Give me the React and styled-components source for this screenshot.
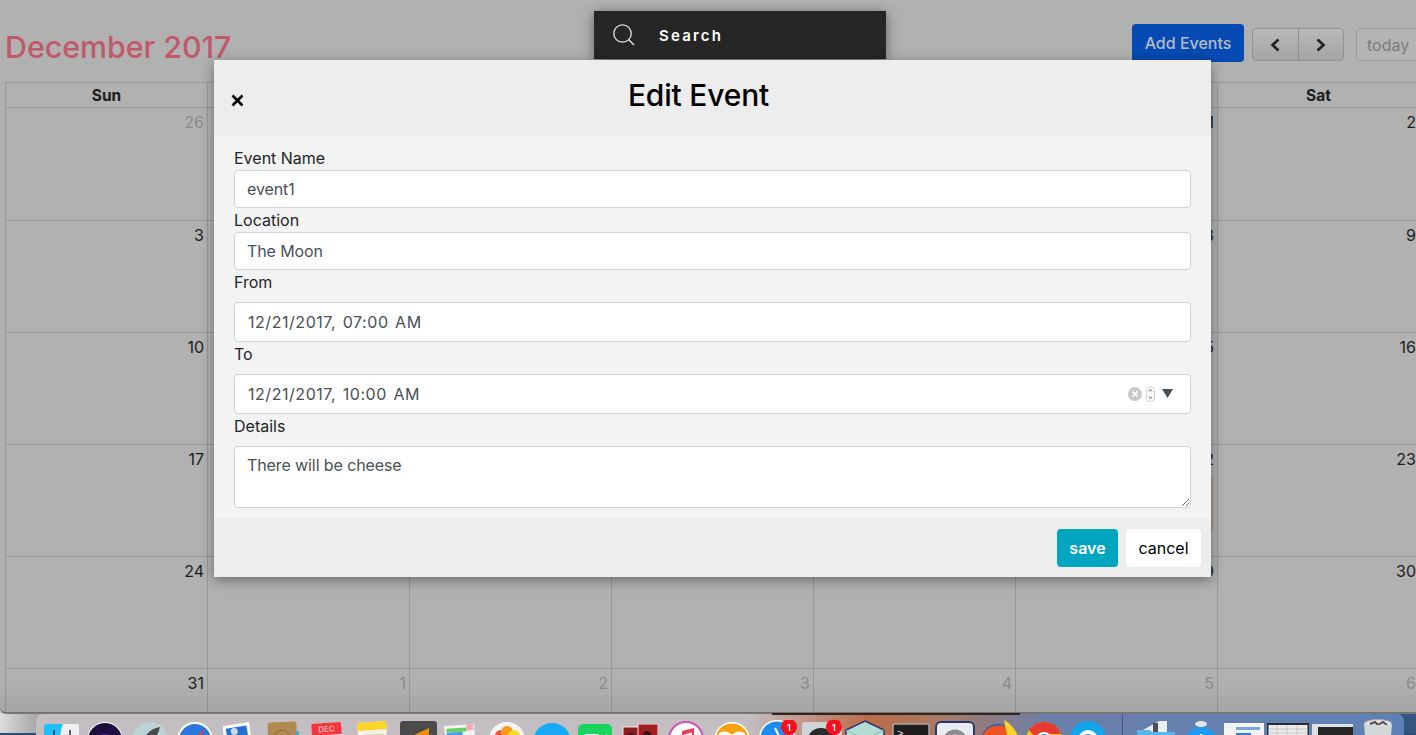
import React from "react";
import styled, { createGlobalStyle } from "styled-components";

const GlobalStyle = createGlobalStyle`
  html, body {
    margin: 0;
    padding: 0;
    overflow: hidden;
    font-family: Inter, "Liberation Sans", sans-serif;
  }
  * { box-sizing: border-box; }
`;

const Screen = styled.div`
  position: relative;
  width: 1416px;
  height: 735px;
  overflow: hidden;
  background:
    linear-gradient(0deg, #2c4b79 0, #2c4b79 2px, transparent 2px),
    linear-gradient(90deg, #dcdcdc 0, #a8a8a8 36px, #34557f 1100px, #34557f 100%);
  &::after {
    content: "";
    position: absolute;
    left: 772px;
    top: 713px;
    width: 248px;
    height: 2px;
    background: #33261f;
  }
`;

const Page = styled.div`
  width: 1430px;
  height: 714px;
  background: #b1b1b1;
  border-bottom: 2px solid #7a7a7a;
  border-bottom-left-radius: 6px;
  overflow: hidden;
  padding-left: 5px;
`;

const Header = styled.header`
  height: 82px;
  display: flex;
  align-items: flex-start;
  justify-content: space-between;
`;

const MonthTitle = styled.h1`
  margin: 29px 0 0;
  font-size: 30.4px;
  line-height: 36px;
  font-weight: 500;
  letter-spacing: -0.05px;
  color: #c05a69;
`;

const Controls = styled.div`
  display: flex;
  align-items: flex-start;
  padding-top: 24px;
  padding-right: 4px;
`;

const AddButton = styled.button`
  width: 112px;
  height: 38px;
  border: 0;
  border-radius: 4px;
  background: #054bb3;
  color: #b6bbc4;
  font: 500 16px Inter, sans-serif;
`;

const NavGroup = styled.div`
  display: flex;
  margin: 4px 12px 0 8px;
  width: 92px;
  height: 33px;
  border: 1px solid #939393;
  border-radius: 4px;
  background: linear-gradient(180deg, #b9b9b9, #a4a4a4);
`;

const NavButton = styled.button`
  flex: 1;
  display: flex;
  align-items: center;
  justify-content: center;
  padding: 0;
  border: 0;
  background: none;
  & + & { border-left: 1px solid #8f8f8f; }
`;

const TodayButton = styled.button`
  margin-top: 4px;
  width: 70px;
  height: 33px;
  border: 1px solid #9a9a9a;
  border-radius: 4px;
  background: #b4b4b4;
  color: #7b7b7b;
  font: 400 16px Inter, sans-serif;
  text-align: left;
  padding: 0 0 0 10px;
`;

const CalendarGrid = styled.div`
  display: grid;
  grid-template-columns: repeat(7, 202px);
  grid-template-rows: 25px 113px repeat(5, 112px);
  width: 1415px;
  border-top: 1px solid #989898;
  border-left: 1px solid #989898;
  color: #1d1d1d;
`;

const DayName = styled.div`
  border-right: 1px solid #989898;
  border-bottom: 1px solid #989898;
  font-size: 15.5px;
  line-height: 26px;
  font-weight: 700;
  text-align: center;
`;

const DayCell = styled.div`
  padding: 4px 3px 0 0;
  border-right: 1px solid #989898;
  border-bottom: 1px solid #989898;
  font-size: 16px;
  line-height: 20px;
  text-align: right;
  color: ${(p) => (p.$muted ? "#8b8b8b" : "#1d1d1d")};
`;

const EventChip = styled.div`
  height: 56px;
  margin: 7px 1px 0 2px;
  border-radius: 3px;
  background: #af9596;
`;

const Shade = styled.div`
  position: absolute;
  left: 0;
  top: 680px;
  width: 100%;
  height: 33px;
  background: linear-gradient(180deg, rgba(0, 0, 0, 0), rgba(0, 0, 0, 0.07));
  pointer-events: none;
`;

const SearchBar = styled.div`
  position: absolute;
  left: 594px;
  top: 11px;
  width: 292px;
  height: 48px;
  display: flex;
  align-items: center;
  gap: 24px;
  padding-left: 19px;
  background: #262626;
  box-shadow: 0 2px 12px rgba(0, 0, 0, 0.45);
`;

const SearchLabel = styled.span`
  color: #fff;
  font-size: 15px;
  font-weight: 600;
  letter-spacing: 2.2px;
`;

const Modal = styled.div`
  position: absolute;
  left: 214px;
  top: 60px;
  width: 997px;
  height: 517px;
  display: flex;
  flex-direction: column;
  background: #f3f3f3;
  box-shadow: 0 3px 12px rgba(0, 0, 0, 0.4);
`;

const ModalHead = styled.div`
  height: 76px;
  flex: none;
  display: grid;
  grid-template-columns: 1fr auto 1fr;
  background: #ededed;
  border-bottom: 1px solid #f1f1f1;
`;

const CloseButton = styled.button`
  justify-self: start;
  align-self: start;
  margin: 34px 0 0 17px;
  padding: 0;
  border: 0;
  background: none;
  display: flex;
`;

const ModalTitle = styled.h2`
  margin: 15px 28px 0 0;
  font-size: 30px;
  line-height: 40px;
  font-weight: 500;
  letter-spacing: -0.2px;
  color: #000;
`;

const ModalBody = styled.form`
  flex: 1;
  padding: 10px 20px 0;
`;

const FieldLabel = styled.label`
  display: block;
  height: 24px;
  font-size: 16px;
  line-height: 24px;
  color: #212529;
  margin-bottom: ${(p) => (p.$spaced ? "8px" : "0")};
`;

const TextInput = styled.input`
  display: block;
  width: 100%;
  height: 38px;
  padding: 0 12px;
  border: 1px solid #ced4da;
  border-radius: 4px;
  background: #fff;
  color: #495057;
  font: 400 16px Inter, sans-serif;
  letter-spacing: -0.1px;
`;

const DateField = styled.div`
  height: 40px;
  display: flex;
  align-items: center;
  justify-content: space-between;
  padding: 0 16px 0 13px;
  border: 1px solid #ced4da;
  border-radius: 4px;
  background: #fff;
  color: #495057;
  font-size: 16px;
  word-spacing: 1.5px;
  letter-spacing: 0.55px;
`;

const DateControls = styled.div`
  display: flex;
  align-items: center;
`;

const Notes = styled.textarea`
  display: block;
  width: 100%;
  height: 62px;
  padding: 8px 12px;
  border: 1px solid #ced4da;
  border-radius: 4px;
  background: #fff;
  color: #495057;
  font: 400 16px Inter, sans-serif;
  letter-spacing: -0.1px;
  resize: vertical;
  outline: none;
`;

const ModalFoot = styled.div`
  height: 59px;
  flex: none;
  display: flex;
  justify-content: flex-end;
  align-items: flex-start;
  gap: 8px;
  padding: 11px 10px 0;
  background: #ededed;
`;

const FootButton = styled.button`
  width: ${(p) => p.$w}px;
  height: 38px;
  border: 0;
  border-radius: 4px;
  background: ${(p) => (p.$primary ? "#00a5bf" : "#fff")};
  color: ${(p) => (p.$primary ? "#fff" : "#000")};
  font: ${(p) => (p.$primary ? 600 : 400)} 16px Inter, sans-serif;
`;

const Dock = styled.div`
  display: flex;
  width: 1368px;
  height: 22px;
  margin-left: 36px;
  overflow: hidden;
  border-radius: 7px 7px 0 0;
  background: linear-gradient(90deg, #c2bec1 0, #c2bec1 52%, #bb6b49 61%, #a87a64 66%, #6b7fa8 74%, #5e80b6 100%);
`;

const DockIcon = styled.svg`
  flex: none;
  width: ${(p) => p.$w}px;
  height: 40px;
  margin-left: ${(p) => p.$gap}px;
  margin-top: ${(p) => p.$top}px;
`;

const DockDivider = styled.div`
  flex: none;
  width: 1px;
  height: 22px;
  margin-left: 15px;
  background: #3e5780;
`;

const weekdays = ["Sun", "Mon", "Tue", "Wed", "Thu", "Fri", "Sat"];

const days = [];
for (let i = 0; i < 42; i++) {
  const n = i < 5 ? 26 + i : i < 36 ? i - 4 : i - 35;
  days.push({ n, muted: i < 5 || i >= 36 });
}

const Finder = () => (
  <>
    <rect width="35" height="36" rx="2" fill="#eef0f3" />
    <path d="M0 2a2 2 0 0 1 2-2h17c-3 8-4 16-4 36H2a2 2 0 0 1-2-2z" fill="#1fc0fb" />
    <path d="M10 6v6M26 6v6" stroke="#2b3a4a" strokeWidth="1.6" />
  </>
);

const Siri = () => (
  <>
    <circle cx="18" cy="18" r="18" fill="#fff" />
    <circle cx="18" cy="18" r="17" fill="#1f0d3f" />
    <circle cx="18" cy="22" r="10" fill="#4b2a9a" />
    <circle cx="24" cy="24" r="5" fill="#b23fd0" />
  </>
);

const Launchpad = () => (
  <>
    <circle cx="18" cy="18" r="18" fill="#bcd3d5" />
    <path d="M28 5c-8 1-14 6-18 15l6 3c6-4 10-10 12-18z" fill="#4a4a4c" />
  </>
);

const Safari = () => (
  <>
    <circle cx="18" cy="18" r="18" fill="#fff" />
    <circle cx="18" cy="18" r="16" fill="#2a78dd" />
    <path d="M29 6L16 17l3 3z" fill="#ee3a33" />
  </>
);

const Mail = () => (
  <g transform="rotate(-9 15 15)">
    <rect x="1" y="3" width="27" height="32" fill="#fff" />
    <rect x="4" y="6" width="21" height="26" fill="#1f72d8" />
    <circle cx="12" cy="10" r="3.5" fill="#cfd8e6" />
  </g>
);

const Contacts = () => (
  <g transform="rotate(-3 15 15)">
    <rect x="1" y="1" width="29" height="34" rx="3" fill="#b08a50" />
    <circle cx="15" cy="16" r="7" fill="none" stroke="#9a7740" strokeWidth="1.5" />
    <rect x="29" y="11" width="3" height="6" fill="#39a7c9" />
  </g>
);

const CalendarApp = () => (
  <g transform="rotate(-4 15 15)">
    <rect x="1" y="1" width="30" height="34" rx="2" fill="#fff" />
    <path d="M1 3a2 2 0 0 1 2-2h26a2 2 0 0 1 2 2v10H1z" fill="#f2383f" />
    <text x="16" y="10" textAnchor="middle" fontSize="8" fontFamily="Inter, sans-serif" fill="#f7dada">DEC</text>
  </g>
);

const NotesApp = () => (
  <g transform="rotate(-4 15 15)">
    <rect x="1" y="1" width="29" height="34" fill="#f6f3e4" />
    <rect x="1" y="1" width="29" height="8" fill="#fcd42a" />
    <path d="M4 14h23M4 19h23" stroke="#cfcab4" />
  </g>
);

const Sublime = () => (
  <>
    <rect width="37" height="36" rx="3" fill="#4b4b4b" />
    <path d="M8 17L29 7v8L8 25z" fill="#f48a0c" />
  </>
);

const Maps = () => (
  <g transform="rotate(-4 15 15)">
    <rect x="1" y="2" width="30" height="34" fill="#f3f3f3" />
    <rect x="3" y="5" width="20" height="4" fill="#6fce63" />
    <rect x="3" y="9" width="16" height="4" fill="#4aa3e8" />
    <rect x="23" y="2" width="7" height="6" fill="#f3a9b8" />
  </g>
);

const Photos = () => (
  <>
    <circle cx="18" cy="18" r="18" fill="#f8f6f4" />
    <circle cx="12" cy="14" r="6" fill="#f0513c" />
    <circle cx="18" cy="10" r="6" fill="#f89a22" />
    <circle cx="25" cy="14" r="6" fill="#f7d92a" />
    <circle cx="15" cy="20" r="5" fill="#e8338f" />
    <circle cx="22" cy="20" r="5" fill="#8cc63f" />
  </>
);

const Messages = () => <circle cx="18" cy="19" r="19" fill="#16aaf6" />;

const FaceTime = () => (
  <>
    <rect width="34" height="36" rx="5" fill="#19d55e" />
    <rect x="6" y="10" width="15" height="12" rx="2" fill="#fff" />
    <path d="M23 14l6-4v12l-6-4z" fill="#fff" />
  </>
);

const PhotoBooth = () => (
  <>
    <rect x="1" y="3" width="20" height="32" fill="#8d1b1e" stroke="#f2e6e6" />
    <rect x="16" y="0" width="20" height="32" fill="#a21e22" stroke="#f2e6e6" />
    <circle cx="9" cy="13" r="4" fill="#2b1a1a" />
    <circle cx="25" cy="11" r="4" fill="#2b1a1a" />
  </>
);

const ITunes = () => (
  <>
    <circle cx="18" cy="18" r="18" fill="#d155b8" />
    <circle cx="18" cy="18" r="16" fill="#fdfdfd" />
    <path d="M14 10l12-3v4l-12 3z" fill="#f4365c" />
    <path d="M14 10h2v16h-2zM24 8h2v14h-2z" fill="#f4365c" />
  </>
);

const Books = () => (
  <>
    <circle cx="18" cy="18" r="18" fill="#fff" />
    <circle cx="18" cy="18" r="16.5" fill="#f9a10f" />
    <path d="M4 13c4-5 10-4 14 0 4-4 10-5 14 0v12H4z" fill="#fff" />
  </>
);

const AppStore = () => (
  <>
    <circle cx="18" cy="18" r="18" fill="#fff" />
    <circle cx="18" cy="18" r="16.5" fill="#1d8df0" />
    <path d="M16 8l6 12" stroke="#fff" strokeWidth="2" />
    <circle cx="30" cy="7" r="8" fill="#f8101c" />
    <text x="30" y="10.5" textAnchor="middle" fontSize="9" fontWeight="600" fontFamily="Inter, sans-serif" fill="#fff">1</text>
  </>
);

const Prefs = () => (
  <>
    <rect x="0" y="2" width="40" height="34" rx="3" fill="#cfd5d7" />
    <circle cx="19" cy="22" r="14" fill="#2a2a2c" />
    <circle cx="19" cy="22" r="7" fill="#8c8c8c" />
    <circle cx="32" cy="7" r="8" fill="#f8101c" />
    <text x="32" y="10.5" textAnchor="middle" fontSize="9" fontWeight="600" fontFamily="Inter, sans-serif" fill="#fff">1</text>
  </>
);

const VirtualBox = () => (
  <>
    <path d="M20 1l19 9v18l-19 9L1 28V10z" fill="#b3dcd4" stroke="#31366e" strokeWidth="1.5" />
    <path d="M1 10l19 9 19-9" fill="none" stroke="#8fbfb8" />
  </>
);

const Terminal = () => (
  <>
    <rect x="1" y="1" width="36" height="36" rx="2" fill="#1e1e1e" stroke="#a8a6a6" strokeWidth="1.5" />
    <text x="5" y="14" fontSize="11" fontFamily="Liberation Mono, monospace" fill="#e8e8e8">&gt;_</text>
  </>
);

const Gear = () => (
  <>
    <rect x="1" y="1" width="38" height="38" rx="5" fill="#e8ebf1" stroke="#26386e" strokeWidth="2" />
    <circle cx="20" cy="21" r="10" fill="none" stroke="#8d8d8f" strokeWidth="5" />
  </>
);

const Firefox = () => (
  <>
    <circle cx="18" cy="21" r="17" fill="#1f5fc7" />
    <path d="M2 18C4 8 14 4 24 6c5 1 10 8 11 14l-12-4-6 2-3 8z" fill="#f0531f" />
    <path d="M24 0c6 3 13 10 15 20-3-3-8-5-12-5z" fill="#fbd22c" />
  </>
);

const Chrome = () => (
  <>
    <circle cx="18" cy="19" r="18" fill="#f7c81b" />
    <path d="M3 9A18 18 0 0 1 35 13H18a7 7 0 0 0-8 4z" fill="#e53a30" />
    <circle cx="18" cy="19" r="8" fill="#fff" />
    <circle cx="18" cy="19" r="6" fill="#3c7fe6" />
  </>
);

const Skype = () => (
  <>
    <circle cx="18" cy="18" r="18" fill="#13a5ec" />
    <circle cx="18" cy="19" r="8" fill="none" stroke="#fff" strokeWidth="4" />
  </>
);

const FolderIcon = () => (
  <>
    <path d="M6 10L22 1l8 0v14H6z" fill="#eceff2" />
    <rect x="16" y="3" width="5" height="10" fill="#4a5058" />
    <path d="M0 10h13l2 2h23v24H0z" fill="#5ab6e9" />
  </>
);

const Clock = () => (
  <>
    <ellipse cx="17" cy="4" rx="6" ry="3" fill="#e4e6ea" />
    <circle cx="17" cy="24" r="17" fill="#1e9af0" />
    <path d="M17 14v10" stroke="#fff" strokeWidth="2" />
  </>
);

const ThumbWindow = () => (
  <>
    <rect y="1" width="40" height="30" fill="#f4f4f4" />
    <rect x="12" y="5" width="24" height="3" fill="#79a7dc" />
    <rect x="12" y="11" width="15" height="10" fill="#2f7fd8" />
  </>
);

const ThumbGrid = () => (
  <>
    <rect y="2" width="42" height="30" fill="#2b2b2b" />
    <rect x="1.5" y="4" width="39" height="26" fill="#eaeaea" />
    <path d="M1.5 8h39M1.5 12h39M1.5 16h39M10 4v26M20 4v26M30 4v26" stroke="#bcbcbc" strokeWidth="0.7" />
  </>
);

const ThumbDark = () => (
  <>
    <rect y="2" width="41" height="30" fill="#dfe1e3" />
    <rect x="6" y="5" width="35" height="25" fill="#262626" />
  </>
);

const Trash = () => (
  <>
    <ellipse cx="16" cy="5" rx="14" ry="4.5" fill="#dfe1e2" stroke="#a4a8aa" />
    <path d="M8 5l5-2 3 3 5-3 4 3" stroke="#5d4a4a" strokeWidth="2" fill="none" />
    <path d="M2 6l3 30h22l3-30z" fill="#d3d7d9" />
  </>
);

const dockItems = [
  { Icon: Finder, w: 35, gap: 8, top: 10 },
  { Icon: Siri, w: 36, gap: 8, top: 8 },
  { Icon: Launchpad, w: 36, gap: 9, top: 8 },
  { Icon: Safari, w: 36, gap: 9, top: 8 },
  { Icon: Mail, w: 30, gap: 10, top: 7 },
  { Icon: Contacts, w: 32, gap: 14, top: 7 },
  { Icon: CalendarApp, w: 32, gap: 12, top: 8 },
  { Icon: NotesApp, w: 31, gap: 14, top: 7 },
  { Icon: Sublime, w: 37, gap: 12, top: 7 },
  { Icon: Maps, w: 32, gap: 7, top: 9 },
  { Icon: Photos, w: 36, gap: 13, top: 8 },
  { Icon: Messages, w: 38, gap: 9, top: 9 },
  { Icon: FaceTime, w: 34, gap: 6, top: 10 },
  { Icon: PhotoBooth, w: 36, gap: 10, top: 10 },
  { Icon: ITunes, w: 36, gap: 10, top: 7 },
  { Icon: Books, w: 36, gap: 10, top: 8 },
  { Icon: AppStore, w: 38, gap: 9, top: 6 },
  { Icon: Prefs, w: 40, gap: 5, top: 6 },
  { Icon: VirtualBox, w: 40, gap: 3, top: 6 },
  { Icon: Terminal, w: 38, gap: 7, top: 9 },
  { Icon: Gear, w: 40, gap: 5, top: 7 },
  { Icon: Firefox, w: 39, gap: 5, top: 6 },
  { Icon: Chrome, w: 37, gap: 7, top: 7 },
  { Icon: Skype, w: 37, gap: 7, top: 7 },
  "divider",
  { Icon: FolderIcon, w: 38, gap: 14, top: 6 },
  { Icon: Clock, w: 34, gap: 9, top: 6 },
  { Icon: ThumbWindow, w: 40, gap: 6, top: 8 },
  { Icon: ThumbGrid, w: 42, gap: 3, top: 7 },
  { Icon: ThumbDark, w: 41, gap: 3, top: 8 },
  { Icon: Trash, w: 32, gap: 9, top: 5 },
];

const SearchIcon = () => (
  <svg width="22" height="22" viewBox="0 0 22 22" fill="none" stroke="#e6e6e6" strokeWidth="1.3">
    <circle cx="9.5" cy="9.5" r="8.7" />
    <path d="M15.8 15.8L21 21" />
  </svg>
);

const Chevron = ({ left }) => (
  <svg width="12" height="14" viewBox="0 0 12 14" fill="none" stroke="#222" strokeWidth="2.6">
    <path d={left ? "M9.5 1.5L3.5 7l6 5.5" : "M2.5 1.5L8.5 7l-6 5.5"} />
  </svg>
);

const CloseIcon = () => (
  <svg width="13" height="13" viewBox="0 0 13 13" stroke="#000" strokeWidth="2.6">
    <path d="M1.5 1.5l10 10M11.5 1.5l-10 10" />
  </svg>
);

const PickerIcons = () => (
  <svg width="46" height="16" viewBox="0 0 46 16">
    <circle cx="7" cy="8" r="7" fill="#c9c9c9" />
    <path d="M4.5 5.5l5 5M9.5 5.5l-5 5" stroke="#fff" strokeWidth="1.7" />
    <rect x="18.5" y="0.5" width="8" height="15" rx="4" fill="#fff" stroke="#cfcfcf" />
    <path d="M21 5.5l1.5-2 1.5 2M21 10.5l1.5 2 1.5-2" fill="none" stroke="#555" strokeWidth="0.9" />
    <path d="M34 3h11l-5.5 9z" fill="#495057" />
  </svg>
);

export default function App() {
  return (
    <Screen>
      <GlobalStyle />
      <Page>
        <Header>
          <MonthTitle>December 2017</MonthTitle>
          <Controls>
            <AddButton>Add Events</AddButton>
            <NavGroup>
              <NavButton><Chevron left /></NavButton>
              <NavButton><Chevron /></NavButton>
            </NavGroup>
            <TodayButton>today</TodayButton>
          </Controls>
        </Header>
        <CalendarGrid>
          {weekdays.map((d) => <DayName key={d}>{d}</DayName>)}
          {days.map((d, i) => (
            <DayCell key={i} $muted={d.muted}>
              {d.n}
              {d.n === 22 && <EventChip />}
            </DayCell>
          ))}
        </CalendarGrid>
      </Page>
      <Dock>
        {dockItems.map((item, i) =>
          item === "divider" ? (
            <DockDivider key={i} />
          ) : (
            <DockIcon key={i} $w={item.w} $gap={item.gap} $top={item.top} viewBox={`0 0 ${item.w} 40`}>
              <item.Icon />
            </DockIcon>
          )
        )}
      </Dock>
      <Shade />
      <SearchBar>
        <SearchIcon />
        <SearchLabel>Search</SearchLabel>
      </SearchBar>
      <Modal>
        <ModalHead>
          <CloseButton><CloseIcon /></CloseButton>
          <ModalTitle>Edit Event</ModalTitle>
        </ModalHead>
        <ModalBody>
          <FieldLabel>Event Name</FieldLabel>
          <TextInput defaultValue="event1" />
          <FieldLabel>Location</FieldLabel>
          <TextInput defaultValue="The Moon" />
          <FieldLabel $spaced>From</FieldLabel>
          <DateField>12/21/2017, 07:00 AM</DateField>
          <FieldLabel $spaced>To</FieldLabel>
          <DateField>
            12/21/2017, 10:00 AM
            <DateControls><PickerIcons /></DateControls>
          </DateField>
          <FieldLabel $spaced>Details</FieldLabel>
          <Notes defaultValue="There will be cheese" />
        </ModalBody>
        <ModalFoot>
          <FootButton $primary $w={61}>save</FootButton>
          <FootButton $w={75}>cancel</FootButton>
        </ModalFoot>
      </Modal>
    </Screen>
  );
}
